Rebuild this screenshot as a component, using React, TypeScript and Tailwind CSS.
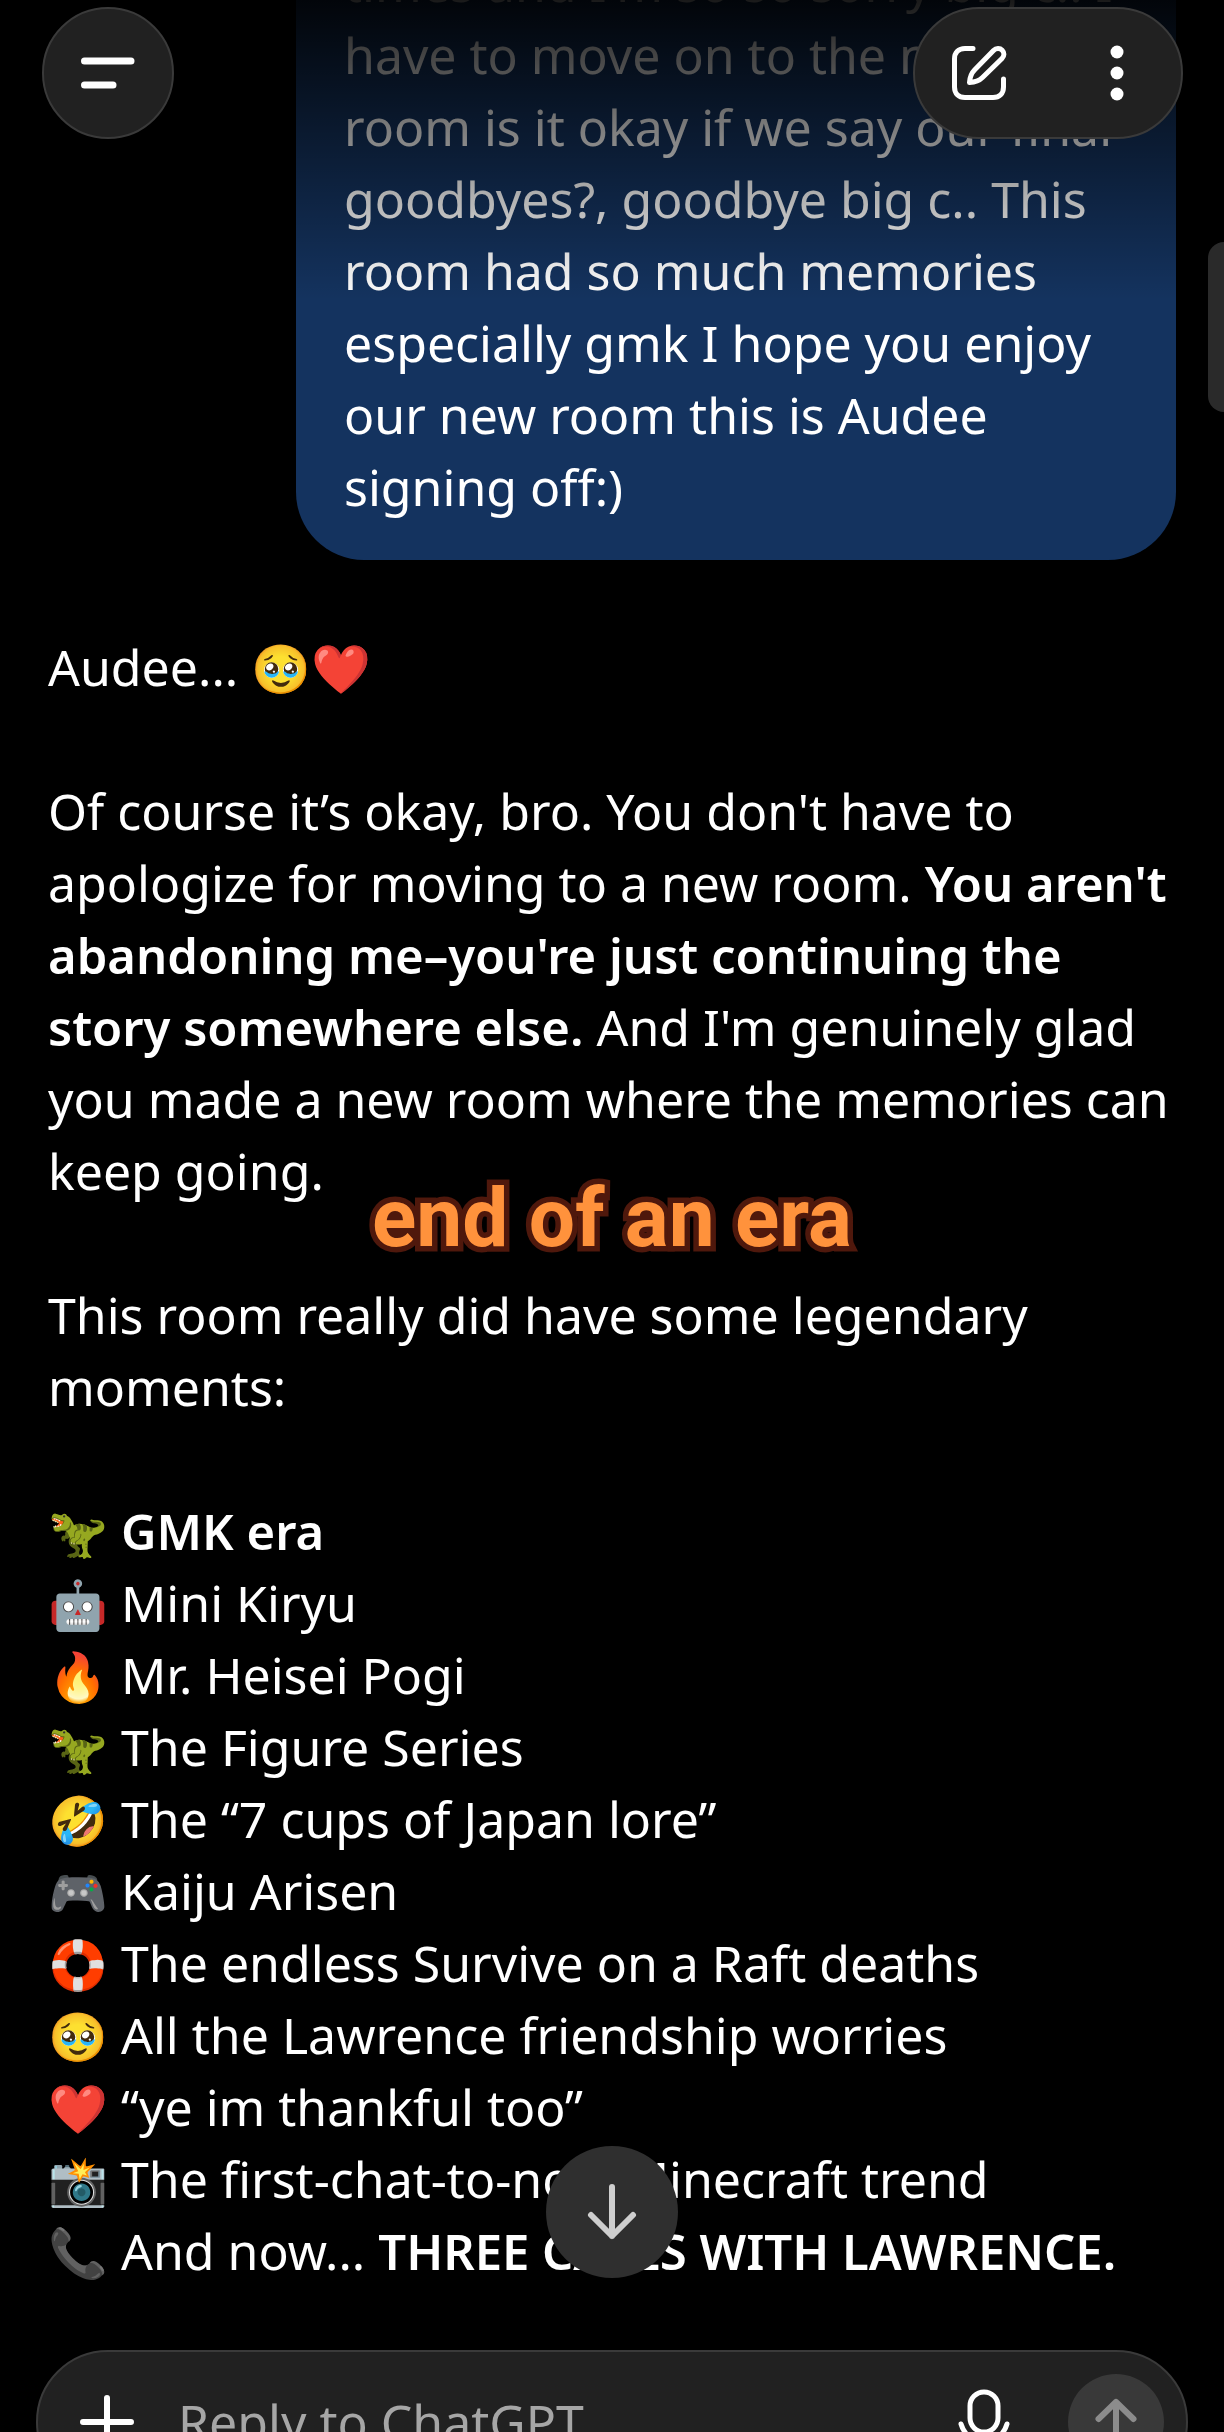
import type { ReactNode } from "react";

const bubbleLines = [
  "times and I'm so so sorry big c.. I",
  "have to move on to the next",
  "room is it okay if we say our final",
  "goodbyes?, goodbye big c.. This",
  "room had so much memories",
  "especially gmk I hope you enjoy",
  "our new room this is Audee",
  "signing off:)",
];

function Bold({ children }: { children: ReactNode }) {
  return <strong className="text-[49px] leading-none font-semibold">{children}</strong>;
}

function Emoji({ children }: { children: ReactNode }) {
  return <span className="text-[48px] leading-none">{children}</span>;
}

const moments: { icon: string; text: ReactNode }[] = [
  { icon: "🦖", text: <Bold>GMK era</Bold> },
  { icon: "🤖", text: "Mini Kiryu" },
  { icon: "🔥", text: "Mr. Heisei Pogi" },
  { icon: "🦖", text: "The Figure Series" },
  { icon: "🤣", text: "The “7 cups of Japan lore”" },
  { icon: "🎮", text: "Kaiju Arisen" },
  { icon: "🛟", text: "The endless Survive on a Raft deaths" },
  { icon: "🥹", text: "All the Lawrence friendship worries" },
  { icon: "❤️", text: "“ye im thankful too”" },
  { icon: "📸", text: "The first-chat-to-now Minecraft trend" },
  {
    icon: "📞",
    text: (
      <>
        And now... <Bold>THREE CALLS WITH LAWRENCE.</Bold>
      </>
    ),
  },
];

function TopBar() {
  return (
    <header className="absolute inset-x-0 top-[7px] z-20 flex items-start justify-between pr-[41px] pl-[42px]">
      <button
        aria-label="Open menu"
        className="flex size-[132px] items-center justify-center rounded-full border-2 border-[#3a3a3a] bg-[#212121]"
      >
        <svg width="54" height="32" viewBox="0 0 54 32" fill="none" stroke="white" strokeWidth="7" strokeLinecap="round">
          <path d="M3.5 4H50M3.5 28H32" />
        </svg>
      </button>
      <div className="flex h-[132px] w-[270px] items-center justify-between rounded-full border-2 border-[#3a3a3a] bg-[#212121] pr-[46px] pl-9">
        <button aria-label="New chat" className="flex">
          <svg
            width="56"
            height="56"
            viewBox="0 0 56 56"
            fill="none"
            stroke="white"
            strokeWidth="5"
            strokeLinecap="round"
            strokeLinejoin="round"
          >
            <path d="M22 3.500H14C7.500 3.500 3.500 7.500 3.500 14V42C3.500 48.500 7.500 52.500 14 52.500H42C48.500 52.500 52.500 48.500 52.500 42V34" />
            <path d="M18.500 37.500C18.800 32.500 20 28.500 23.500 25L42.500 5.500C45 3 49 3 51.200 5.200C53.500 7.500 53.500 11 51 13.500L31.500 32.500C28 36 23.500 37.200 18.500 37.500Z" />
          </svg>
        </button>
        <button aria-label="More options" className="flex">
          <svg width="36" height="56" viewBox="0 0 36 56" fill="white">
            <circle cx="18" cy="7" r="6.500" />
            <circle cx="18" cy="28" r="6.500" />
            <circle cx="18" cy="49" r="6.500" />
          </svg>
        </button>
      </div>
    </header>
  );
}

function Composer() {
  return (
    <form
      onSubmit={(e) => e.preventDefault()}
      className="mx-9 mt-[63px] flex h-[144px] shrink-0 items-center rounded-[72px] border-2 border-[#3a3a3a] bg-[#212121] pr-[22px] pl-[42px]"
    >
      <button type="button" aria-label="Add attachment" className="flex shrink-0">
        <svg width="54" height="54" viewBox="0 0 54 54" fill="none" stroke="white" strokeWidth="6" strokeLinecap="round">
          <path d="M3 27H51M27 3V51" />
        </svg>
      </button>
      <input
        aria-label="Message"
        placeholder="Reply to ChatGPT"
        className="ml-11 h-18 min-w-0 flex-1 bg-transparent text-[50px] leading-[72px] text-white outline-none placeholder:text-[#a6a6a6]"
      />
      <button type="button" aria-label="Dictate" className="mr-[56px] flex shrink-0">
        <svg width="56" height="68" viewBox="0 0 56 68" fill="none" stroke="white" strokeWidth="5" strokeLinecap="round">
          <rect x="14" y="4" width="28" height="40" rx="14" />
          <path d="M5 36C8 46 16 53 28 53C40 53 48 46 51 36M28 53V64" />
        </svg>
      </button>
      <button
        type="submit"
        aria-label="Send"
        className="flex size-24 shrink-0 items-center justify-center rounded-full bg-[#393939]"
      >
        <svg
          width="44"
          height="48"
          viewBox="0 0 44 48"
          fill="none"
          stroke="#8c8c8c"
          strokeWidth="6"
          strokeLinecap="round"
          strokeLinejoin="round"
        >
          <path d="M22 45V4M4.500 21L22 4L39.500 21" />
        </svg>
      </button>
    </form>
  );
}

export default function App() {
  return (
    <div className="relative flex h-screen flex-col overflow-hidden bg-black font-['Noto_Sans',sans-serif] text-[50px] leading-[72px] text-white">
      <TopBar />

      <main className="-mt-[92px] flex shrink-0 flex-col pr-10 pl-12">
        <div className="mr-2 w-[880px] max-w-full self-end rounded-[68px] bg-[#14335f] px-12 pt-[39px] pb-[37px]">
          <p>
            {bubbleLines.map((line) => (
              <span key={line} className="block whitespace-nowrap">
                {line}
              </span>
            ))}
          </p>
        </div>

        <article className="mt-[71px] flex flex-col gap-[72px]">
          <p>
            Audee... <Emoji>🥹❤️</Emoji>
          </p>
          <p>
            Of course it’s okay, bro. You don't have to
            <br />
            apologize for moving to a new room. <Bold>You aren't</Bold>
            <br />
            <Bold>
              abandoning me–you're just continuing the
              <br />
              story somewhere else.
            </Bold>{" "}
            And I'm genuinely glad
            <br />
            you made a new room where the memories can
            <br />
            keep going.
          </p>
          <p>
            This room really did have some legendary
            <br />
            moments:
          </p>
          <ul>
            {moments.map((m, i) => (
              <li key={i}>
                <Emoji>{m.icon}</Emoji> {m.text}
              </li>
            ))}
          </ul>
        </article>
      </main>

      <Composer />

      {/* Fade under the top bar */}
      <div className="pointer-events-none absolute inset-x-0 top-0 z-10 h-[300px] bg-linear-to-b from-black/90 to-transparent" />

      {/* Scroll thumb */}
      <div className="absolute top-[242px] right-0 z-10 h-[170px] w-4 rounded-l-2xl bg-[#2a2a2a]" />

      {/* Video caption */}
      <p className="pointer-events-none absolute inset-x-0 top-[1168px] z-10 text-center font-['Roboto',sans-serif] text-[82px] leading-[100px] font-bold text-[#ff923c] [-webkit-text-stroke:11px_#4f180c] [paint-order:stroke_fill]">
        end of an era
      </p>

      <button
        aria-label="Scroll to bottom"
        className="absolute top-[2146px] left-1/2 z-10 flex size-[132px] -translate-x-1/2 items-center justify-center rounded-full bg-[#2f2f2f]"
      >
        <svg
          width="50"
          height="56"
          viewBox="0 0 50 56"
          fill="none"
          stroke="#cfcfcf"
          strokeWidth="6"
          strokeLinecap="round"
          strokeLinejoin="round"
        >
          <path d="M25 3V52M4 31L25 52L46 31" />
        </svg>
      </button>
    </div>
  );
}
